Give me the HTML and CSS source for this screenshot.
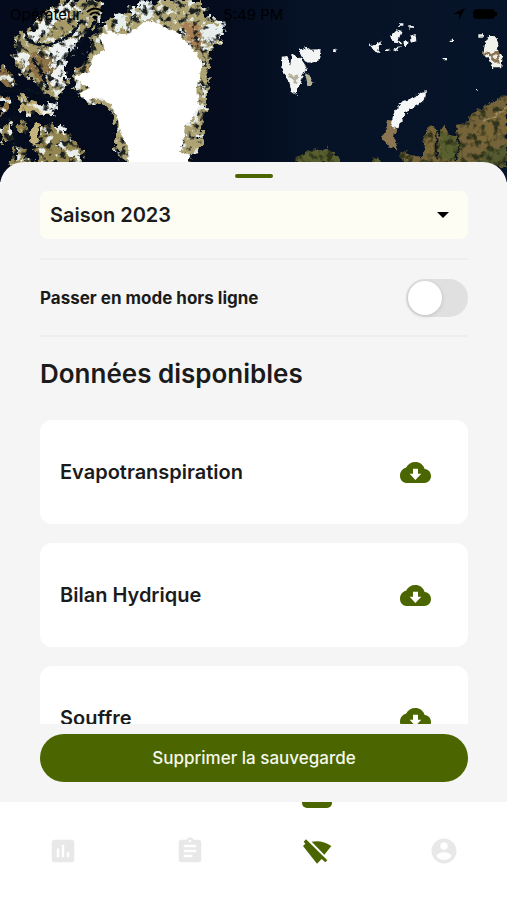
FILE: index.html
```html
<!DOCTYPE html>
<html lang="fr">
<head>
  <meta charset="UTF-8" />
  <title>Mode hors ligne</title>
  <meta name="viewport" content="width=device-width, initial-scale=1.0" />
  <link rel="stylesheet" href="styles.css">
</head>
<body>

  <header class="map">
    <svg class="map-image" viewBox="0 0 1521 546" preserveAspectRatio="xMidYMin slice" aria-hidden="true">
      <defs>
        <linearGradient id="sea" x1="0" y1="0" x2="1" y2="0">
          <stop offset="0" stop-color="#040b1c" />
          <stop offset=".45" stop-color="#040c1e" />
          <stop offset=".6" stop-color="#061226" />
          <stop offset="1" stop-color="#061429" />
        </linearGradient>
        <filter id="coast" x="-5%" y="-5%" width="110%" height="110%" color-interpolation-filters="sRGB">
          <feTurbulence type="fractalNoise" baseFrequency=".07" numOctaves="3" seed="4" result="n" />
          <feDisplacementMap in="SourceGraphic" in2="n" scale="16" xChannelSelector="R" yChannelSelector="G" />
        </filter>
        <filter id="ragged" x="-5%" y="-5%" width="110%" height="110%" color-interpolation-filters="sRGB">
          <feTurbulence type="fractalNoise" baseFrequency=".05" numOctaves="3" seed="9" result="n" />
          <feDisplacementMap in="SourceGraphic" in2="n" scale="44" xChannelSelector="R" yChannelSelector="G" result="d" />
          <feTurbulence type="fractalNoise" baseFrequency=".045" numOctaves="4" seed="21" result="grain" />
          <feColorMatrix in="grain" values="0 0 0 0 .1  0 0 0 0 .12  0 0 0 0 .12  6 0 0 0 -3.1" />
          <feComposite in2="d" operator="in" result="shade" />
          <feColorMatrix in="grain" values="0 0 0 0 .9  0 0 0 0 .93  0 0 0 0 .92  0 8 0 0 -4.6" />
          <feComposite in2="d" operator="in" result="snow" />
          <feMerge>
            <feMergeNode in="d" />
            <feMergeNode in="shade" />
            <feMergeNode in="snow" />
          </feMerge>
        </filter>
        <filter id="ground" x="-5%" y="-5%" width="110%" height="110%" color-interpolation-filters="sRGB">
          <feTurbulence type="fractalNoise" baseFrequency=".05" numOctaves="3" seed="4" result="n" />
          <feDisplacementMap in="SourceGraphic" in2="n" scale="24" xChannelSelector="R" yChannelSelector="G" result="d" />
          <feColorMatrix in="n" values="0 0 0 0 .18  0 0 0 0 .2  0 0 0 0 .1  4 0 0 0 -1.9" />
          <feComposite in2="d" operator="in" result="shade" />
          <feMerge>
            <feMergeNode in="d" />
            <feMergeNode in="shade" />
          </feMerge>
        </filter>
      </defs>
      <rect width="1521" height="546" fill="url(#sea)" />

      <!-- Ellesmere and the arctic islands -->
      <g filter="url(#ragged)">
        <path fill="#a59a68" d="M150 30L185 0H290L312 30L300 70L258 100L225 140L195 170L200 250L170 300L135 285L100 240L60 220L40 150L55 100L95 90Z" />
        <path fill="#8e7347" d="M0 195L30 215L50 245L35 270L0 250ZM95 150L150 155L160 225L120 250L90 200ZM0 290L25 285L35 330L0 340Z" />
        <path fill="#c0ad74" d="M50 280L90 300L125 315L165 320L155 345L90 345L60 335Z" />
        <path fill="#92854f" d="M0 375L30 365L40 420L15 430L0 410ZM50 365L85 370L75 405L55 395ZM125 370L175 375L210 410L250 460L240 500H120L100 450L120 430ZM40 430L75 450L90 500H30Z" />
        <path fill="#eef2f1" d="M155 35L190 5H225L215 40L170 65L120 110L95 125L85 105ZM170 120L240 108L225 150L195 180L200 235L175 265L150 250L158 205L150 165ZM50 140L85 165L95 195L75 205L45 165ZM130 310H160L168 340H135ZM165 375L190 380L200 410ZM195 445L225 450L240 475L215 470Z" />
      </g>
      <path filter="url(#coast)" fill="#c4b37a" d="M112 368Q76 400 96 435L120 425Q104 400 124 372Z" />
      <path filter="url(#coast)" fill="none" stroke="#07101d" stroke-width="8" d="M75 95Q80 140 150 135L215 105L245 60M290 60L250 115L205 175M100 180L125 215L145 270M0 275L90 270L165 300M0 355H165M40 290L48 480" />

      <!-- Greenland -->
      <g filter="url(#ragged)">
        <path fill="#ada373" d="M262 145L305 75L350 50L430 20L480 0H605L620 50L665 70L670 105L635 150L622 210L625 280L608 360L603 440L565 486H370L345 450L350 380L325 320L260 300L225 270L222 215L265 190Z" />
        <path fill="#a98055" d="M540 70L600 75L610 160L580 140ZM225 215L262 198L265 225Z" />
        <path fill="#e7f0ef" d="M385 20L405 15L420 60L395 65ZM415 5L455 0L460 60L430 60ZM345 45L365 38L385 90H350ZM615 75L670 65L675 100L630 140L612 120Z" />
      </g>
      <path filter="url(#coast)" fill="#fff" d="M300 105L330 95L380 105L410 85L435 62L480 72L510 90L535 100L560 125L590 160L605 190L600 230L592 270L597 315L575 360L555 375L550 430L540 455L570 465L560 510H388L384 440L362 400L352 350L335 315L305 295L255 300L235 280L270 265L230 240L220 228L265 218L280 170L315 150Z" />

      <!-- Svalbard and Franz Josef -->
      <g filter="url(#coast)" fill="#f3f5f5">
        <path d="M845 170L862 168L870 195L878 160L900 175L920 205L905 230L890 285L875 275L865 235L848 215Z" />
        <path d="M895 150L920 140L935 152L965 150L960 180L930 190L910 180Z" />
        <path fill="#b4b19a" d="M915 220L928 225L942 248L925 262ZM866 225L898 228L885 250Z" />
        <path d="M997 152L1012 148L1008 158ZM1105 130L1122 136L1145 125L1135 150L1142 160L1125 155ZM1170 108L1190 88L1205 95L1195 120L1205 130L1180 128ZM1205 125L1228 122L1218 140ZM1178 150L1200 138L1192 156ZM1232 110L1250 105L1252 122L1236 128ZM1197 70H1210V80H1197ZM1228 76H1242V86H1228ZM1158 145H1168V152H1158ZM1352 116H1362V123H1352ZM1328 174H1338V181H1328ZM1425 264H1433V270H1425Z" />
      </g>

      <!-- Novaya Zemlya -->
      <g filter="url(#coast)">
        <path fill="#8b7651" d="M1165 362L1194 370L1182 410L1195 448L1170 445L1148 415Z" />
        <path fill="#f6f7f7" d="M1265 275L1280 274L1280 292L1255 314L1228 328L1208 352L1192 385L1172 378L1182 335L1208 303L1245 292Z" />
      </g>

      <!-- Siberia -->
      <path filter="url(#coast)" fill="#f1f1ec" d="M1435 103H1452V113H1435ZM1468 105L1484 105L1495 130L1487 150L1508 170L1503 205L1480 205L1468 180L1450 165L1455 130Z" />
      <path filter="url(#coast)" fill="none" stroke="#8a7350" stroke-width="8" d="M1450 160L1475 165L1490 155L1495 190L1475 172" />
      <g filter="url(#ground)">
        <path fill="#75633a" d="M1521 285L1490 300L1440 325L1410 345L1400 370L1365 375L1370 410L1345 400L1330 380L1315 405L1300 375L1285 380L1270 420L1265 475L1200 455L1215 500H1521Z" />
        <path fill="#7c6739" d="M1521 320L1440 370L1400 420L1430 440L1521 385ZM1275 400L1300 385L1300 470L1270 460Z" />
        <path fill="#59602f" d="M1320 395L1365 410L1385 440L1370 480L1320 475ZM890 475L930 450L985 440L1010 470L1030 490H890ZM1120 475L1135 470L1140 490H1120Z" />
        <path fill="#565a30" d="M1521 430L1450 455L1430 500H1521Z" />
      </g>
      <path filter="url(#coast)" d="M1450 362L1485 348L1521 322" fill="none" stroke="#a18e68" stroke-width="4" />
      <path filter="url(#coast)" d="M1309 390L1312 480M1370 400L1380 440L1365 480" fill="none" stroke="#0a1420" stroke-width="5" />
    </svg>

    <div class="status-bar">
      <span class="carrier">
        Opérateur
        <svg width="18" height="14" viewBox="0 0 18 14" aria-hidden="true">
          <path d="M1 5Q9-2 17 5M4 8Q9 3 14 8" fill="none" stroke="#000" stroke-width="2" />
          <path d="M6 10Q9 7 12 10L9 13Z" />
        </svg>
      </span>
      <time>5:49 PM</time>
      <span class="status-icons">
        <svg width="12" height="12" viewBox="0 0 12 12" aria-hidden="true"><path d="M12 0L0 6H6V12Z" /></svg>
        <svg width="24" height="10" viewBox="0 0 24 10" aria-hidden="true"><rect width="22" height="10" rx="4" /><rect x="22" y="3" width="2" height="4" rx="1" /></svg>
      </span>
    </div>
  </header>

  <main class="sheet">
    <div class="handle"></div>

    <div class="season">
      <select id="season" aria-label="Saison">
        <option>Saison 2023</option>
      </select>
      <svg class="caret" width="12" height="6" viewBox="0 0 12 6" aria-hidden="true"><path d="M0 0H12L6 6Z" /></svg>
    </div>

    <div class="offline-row">
      <label for="offline">Passer en mode hors ligne</label>
      <input type="checkbox" id="offline" class="switch" role="switch" />
    </div>

    <h1>Données disponibles</h1>

    <div class="data-list">
      <article class="card">
        <h2>Evapotranspiration</h2>
        <button type="button" class="download" aria-label="Télécharger Evapotranspiration">
          <svg viewBox="0 0 93 63"><use href="#cloud" /></svg>
        </button>
      </article>
      <article class="card">
        <h2>Bilan Hydrique</h2>
        <button type="button" class="download" aria-label="Télécharger Bilan Hydrique">
          <svg viewBox="0 0 93 63"><use href="#cloud" /></svg>
        </button>
      </article>
      <article class="card">
        <h2>Souffre</h2>
        <button type="button" class="download" aria-label="Télécharger Souffre">
          <svg viewBox="0 0 93 63"><use href="#cloud" /></svg>
        </button>
      </article>
    </div>

    <button type="button" class="delete-btn">Supprimer la sauvegarde</button>
  </main>

  <nav class="tabs">
    <a href="#stats" aria-label="Statistiques">
      <svg viewBox="0 0 24 24"><path d="M19 3H5c-1.1 0-2 .9-2 2v14c0 1.1.9 2 2 2h14c1.1 0 2-.9 2-2V5c0-1.1-.9-2-2-2zM9 17H7v-7h2v7zm4 0h-2V7h2v10zm4 0h-2v-4h2v4z" /></svg>
    </a>
    <a href="#notes" aria-label="Notes">
      <svg viewBox="0 0 24 24"><path d="M19 3h-4.18C14.4 1.84 13.3 1 12 1c-1.3 0-2.4.84-2.82 2H5c-1.1 0-2 .9-2 2v14c0 1.1.9 2 2 2h14c1.1 0 2-.9 2-2V5c0-1.1-.9-2-2-2zm-7 0c.55 0 1 .45 1 1s-.45 1-1 1-1-.45-1-1 .45-1 1-1zm2 14H7v-2h7v2zm3-4H7v-2h10v2zm0-4H7V7h10v2z" /></svg>
    </a>
    <a href="#offline" class="active" aria-label="Hors ligne" aria-current="page">
      <svg viewBox="0 0 90 90"><path d="M3 30L10 23L5 17L12 10L76 73L70 79L59 69L45 83ZM29 17Q61 11 88 30L67 56Z" /></svg>
    </a>
    <a href="#profile" aria-label="Profil">
      <svg viewBox="0 0 24 24"><path d="M12 2C6.48 2 2 6.48 2 12s4.48 10 10 10 10-4.48 10-10S17.52 2 12 2zm0 3c1.66 0 3 1.34 3 3s-1.34 3-3 3-3-1.34-3-3 1.34-3 3-3zm0 14.2c-2.5 0-4.71-1.28-6-3.22.03-1.99 4-3.08 6-3.08 1.99 0 5.97 1.09 6 3.08-1.29 1.94-3.5 3.22-6 3.22z" /></svg>
    </a>
  </nav>

  <svg class="sprite" width="0" height="0" aria-hidden="true">
    <symbol id="cloud" viewBox="0 0 93 63">
      <path fill-rule="evenodd" d="M22 63C9 63 0 54 0 41C0 28 8 19 18 17C24 6 34 0 46 0C59 0 70 8 74 21C86 23 93 31 93 42C93 54 84 63 73 63ZM39 20V35H29L46 54L64 35H54V20Z" />
    </symbol>
  </svg>

</body>
</html>
```
FILE: styles.css
```css
* {
  box-sizing: border-box;
}

body {
  margin: 0;
  height: 100vh;
  display: flex;
  flex-direction: column;
  font-family: Inter, sans-serif;
  background: #fff;
  color: #1b1b1b;
}

.map {
  position: relative;
  flex: none;
  height: 182px;
  overflow: hidden;
  background: #040b1c;
}

.map-image {
  display: block;
  width: 100%;
  height: 100%;
}

.status-bar {
  position: absolute;
  top: 0;
  left: 0;
  right: 0;
  display: grid;
  grid-template-columns: 1fr auto 1fr;
  align-items: center;
  height: 28px;
  padding: 0 10px;
  font-size: 15px;
  color: #000;
}

.carrier,
.status-icons {
  display: flex;
  align-items: center;
  gap: 4px;
}

.status-icons {
  justify-content: flex-end;
  gap: 8px;
}

.sheet {
  position: relative;
  flex: 1;
  min-height: 0;
  display: flex;
  flex-direction: column;
  margin-top: -20px;
  padding: 12px 39px 20px 40px;
  border-radius: 24px 24px 0 0;
  background: #f5f5f5;
}

.handle {
  flex: none;
  width: 38px;
  height: 4px;
  margin: 0 auto 13px;
  border-radius: 2px;
  background: #4b6600;
}

.season {
  position: relative;
  padding-bottom: 19px;
}

.season select {
  display: block;
  width: 100%;
  height: 48px;
  padding: 0 10px;
  border: none;
  border-radius: 8px;
  appearance: none;
  background: #fdfdf3;
  color: #1b1b1b;
  font-family: inherit;
  font-size: 20px;
  font-weight: 600;
}

.caret {
  position: absolute;
  top: 21px;
  right: 19px;
  pointer-events: none;
}

.offline-row {
  display: flex;
  align-items: center;
  justify-content: space-between;
  height: 79px;
  border-top: 2px solid #eee;
  border-bottom: 2px solid #eee;
  font-size: 17px;
  font-weight: 700;
}

.switch {
  flex: none;
  width: 62px;
  height: 38px;
  margin: 0;
  padding: 2px;
  appearance: none;
  border-radius: 19px;
  background: #e0e0e0;
}

.switch::before {
  content: "";
  display: block;
  width: 34px;
  height: 34px;
  border-radius: 50%;
  background: #fff;
  box-shadow: 0 1px 4px rgba(0, 0, 0, 0.15);
}

.switch:checked {
  background: #4b6600;
}

.switch:checked::before {
  margin-left: 24px;
}

h1 {
  margin: 21px 0 30px;
  font-size: 26px;
  line-height: 32px;
  font-weight: 600;
}

.data-list {
  flex: 1;
  min-height: 0;
  overflow: hidden;
}

.card {
  display: flex;
  align-items: center;
  justify-content: space-between;
  height: 104px;
  margin-bottom: 19px;
  padding: 0 37px 0 20px;
  border-radius: 12px;
  background: #fff;
}

.card h2 {
  margin: 0;
  font-size: 20px;
  font-weight: 600;
}

.download {
  padding: 0;
  border: none;
  background: none;
  cursor: pointer;
}

.download svg {
  display: block;
  width: 31px;
  height: 21px;
  fill: #4b6600;
}

.delete-btn {
  flex: none;
  height: 48px;
  margin-top: 10px;
  border: none;
  border-radius: 24px;
  background: #4b6600;
  color: #f5f8ea;
  font-family: inherit;
  font-size: 17px;
  font-weight: 500;
  cursor: pointer;
}

.tabs {
  flex: none;
  display: grid;
  grid-template-columns: repeat(4, 1fr);
  height: 98px;
}

.tabs a {
  position: relative;
  display: flex;
  align-items: center;
  justify-content: center;
}

.tabs svg {
  width: 30px;
  height: 30px;
  fill: #e8e8e9;
}

.tabs .active svg {
  fill: #4b6600;
}

.tabs .active::before {
  content: "";
  position: absolute;
  top: 0;
  width: 30px;
  height: 6px;
  border-radius: 0 0 5px 5px;
  background: #4b6600;
}

.sprite {
  position: absolute;
}
```
